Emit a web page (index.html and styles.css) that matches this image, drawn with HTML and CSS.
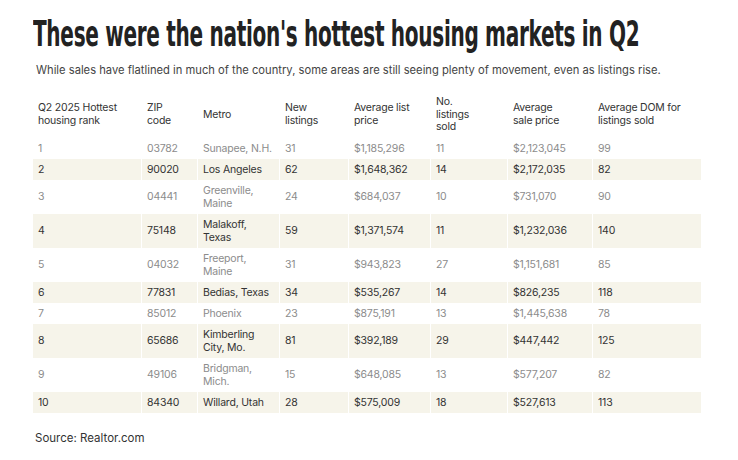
FILE: index.html
```html
<!DOCTYPE html>
<html lang="en">
<head>
<meta charset="utf-8">
<title>Hottest housing markets in Q2</title>
<link rel="stylesheet" href="styles.css">
</head>
<body>
<main class="page">
  <h1 class="title"><span class="title-text">These were the nation's hottest housing markets in Q2</span></h1>
  <p class="dek">While sales have flatlined in much of the country, some areas are still seeing plenty of movement, even as listings rise.</p>
  <table class="data">
    <colgroup>
      <col class="c1"><col class="c2"><col class="c3"><col class="c4"><col class="c5"><col class="c6"><col class="c7"><col class="c8">
    </colgroup>
    <thead>
      <tr>
        <th>Q2 2025 Hottest housing rank</th>
        <th>ZIP<br>code</th>
        <th>Metro</th>
        <th>New<br>listings</th>
        <th>Average list price</th>
        <th>No.<br>listings<br>sold</th>
        <th>Average<br>sale price</th>
        <th>Average DOM for listings sold</th>
      </tr>
    </thead>
    <tbody>
      <tr><td>1</td><td>03782</td><td>Sunapee, N.H.</td><td>31</td><td>$1,185,296</td><td>11</td><td>$2,123,045</td><td>99</td></tr>
      <tr><td>2</td><td>90020</td><td>Los Angeles</td><td>62</td><td>$1,648,362</td><td>14</td><td>$2,172,035</td><td>82</td></tr>
      <tr><td>3</td><td>04441</td><td>Greenville,<br>Maine</td><td>24</td><td>$684,037</td><td>10</td><td>$731,070</td><td>90</td></tr>
      <tr><td>4</td><td>75148</td><td>Malakoff,<br>Texas</td><td>59</td><td>$1,371,574</td><td>11</td><td>$1,232,036</td><td>140</td></tr>
      <tr><td>5</td><td>04032</td><td>Freeport,<br>Maine</td><td>31</td><td>$943,823</td><td>27</td><td>$1,151,681</td><td>85</td></tr>
      <tr><td>6</td><td>77831</td><td>Bedias, Texas</td><td>34</td><td>$535,267</td><td>14</td><td>$826,235</td><td>118</td></tr>
      <tr><td>7</td><td>85012</td><td>Phoenix</td><td>23</td><td>$875,191</td><td>13</td><td>$1,445,638</td><td>78</td></tr>
      <tr><td>8</td><td>65686</td><td>Kimberling<br>City, Mo.</td><td>81</td><td>$392,189</td><td>29</td><td>$447,442</td><td>125</td></tr>
      <tr><td>9</td><td>49106</td><td>Bridgman,<br>Mich.</td><td>15</td><td>$648,085</td><td>13</td><td>$577,207</td><td>82</td></tr>
      <tr><td>10</td><td>84340</td><td>Willard, Utah</td><td>28</td><td>$575,009</td><td>18</td><td>$527,613</td><td>113</td></tr>
    </tbody>
  </table>
  <p class="source">Source: Realtor.com</p>
</main>
</body>
</html>
```

FILE: styles.css
```css
html, body {
  margin: 0;
  padding: 0;
  background: #ffffff;
}

body {
  font-family: "Inter", "Liberation Sans", sans-serif;
  color: #333333;
}

.page {
  padding: 14px 0 0 33px;
}

.title {
  margin: 0;
  font-family: "DejaVu Sans Condensed", "Liberation Sans Narrow", sans-serif;
  font-weight: 700;
  font-size: 36px;
  line-height: 40px;
  color: #222222;
  white-space: nowrap;
  overflow: hidden;
}

.title-text {
  display: inline-block;
  transform-origin: left center;
  transform: scaleX(0.619);
  letter-spacing: -0.5px;
}

.dek {
  margin: 8px 0 0 3px;
  font-size: 11.2px;
  line-height: 16px;
  color: #444444;
}

.data {
  margin-top: 14px;
  border-collapse: separate;
  border-spacing: 1px 0;
  font-size: 10.5px;
  letter-spacing: -0.2px;
  line-height: 13px;
  table-layout: fixed;
  width: 669px;
  margin-left: -1px;
}

.c1 { width: 108px; }
.c2 { width: 55px; }
.c3 { width: 81px; }
.c4 { width: 68px; }
.c5 { width: 81px; }
.c6 { width: 76px; }
.c7 { width: 84px; }
.c8 { width: 108px; }

.data th {
  font-weight: 400;
  text-align: left;
  vertical-align: middle;
  padding: 4px 5px 4px 5px;
  color: #333333;
  line-height: 12.5px;
}

.data td {
  padding: 4px 5px;
  vertical-align: middle;
  text-align: left;
  color: #8c8c8c;
}

.data tbody tr:nth-child(even) td {
  background: #f6f4ea;
  color: #333333;
}

.source {
  margin: 18px 0 0 2px;
  font-size: 11.5px;
  color: #333333;
}
```
